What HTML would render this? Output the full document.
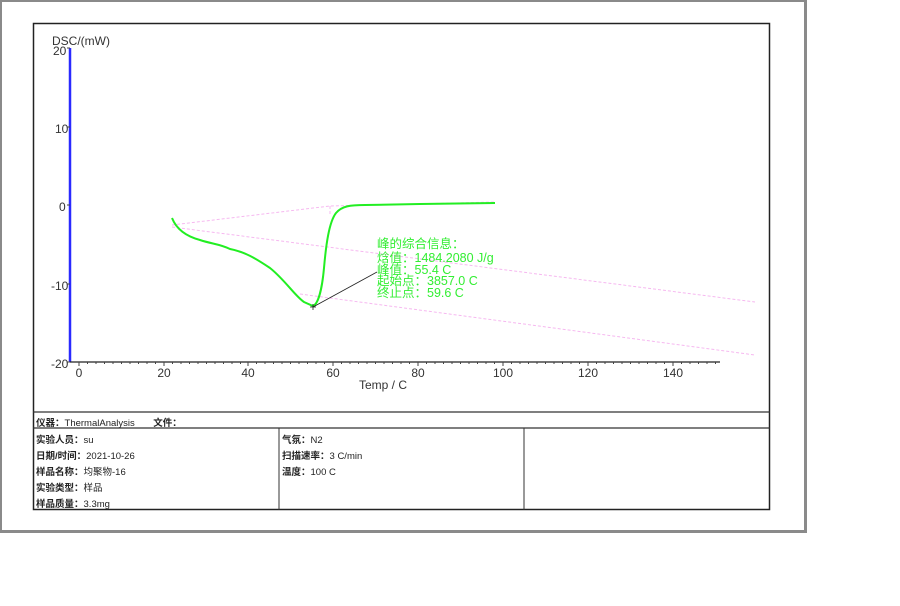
<!DOCTYPE html>
<html><head><meta charset="utf-8"><style>
body{margin:0;width:900px;height:606px;background:#fff;position:relative;overflow:hidden;font-family:"Liberation Sans","Noto Sans CJK SC",sans-serif}
.frame{position:absolute;left:0;top:0;width:802px;height:528px;border:2px solid #8a8a8a;border-right-width:3px;border-bottom-width:3px}
.t{position:absolute;font-size:9.5px;color:#222;white-space:nowrap}
.t b{font-weight:bold}
</style></head><body>
<div class="frame"></div>
<svg width="900" height="606" style="position:absolute;left:0;top:0">
<rect x="33.5" y="23.5" width="736" height="486" fill="none" stroke="#222" stroke-width="1.5"/>
<line x1="33" y1="412" x2="770" y2="412" stroke="#333" stroke-width="1.3"/>
<line x1="33" y1="428" x2="770" y2="428" stroke="#333" stroke-width="1.3"/>
<line x1="279" y1="428" x2="279" y2="510" stroke="#333" stroke-width="1"/>
<line x1="524" y1="428" x2="524" y2="510" stroke="#333" stroke-width="1"/>
<line x1="70" y1="48" x2="70" y2="362" stroke="#2a2aff" stroke-width="2.5"/>
<line x1="70" y1="362" x2="720" y2="362" stroke="#222" stroke-width="1.2"/>
<g stroke="#444" stroke-width="1">
<path d="M79 362v4M164 362v4M248 362v4M333 362v4M418 362v4M503 362v4M588 362v4M673 362v4"/>
<path d="M87.5 362v2M96 362v2M104.5 362v2M113 362v2M121.5 362v2M130 362v2M138.5 362v2M147 362v2M155.5 362v2M172.5 362v2M181 362v2M189.5 362v2M198 362v2M206.5 362v2M215 362v2M223.5 362v2M232 362v2M240.5 362v2M256.5 362v2M265 362v2M273.5 362v2M282 362v2M290.5 362v2M299 362v2M307.5 362v2M316 362v2M324.5 362v2M341.5 362v2M350 362v2M358.5 362v2M367 362v2M375.5 362v2M384 362v2M392.5 362v2M401 362v2M409.5 362v2M426.5 362v2M435 362v2M443.5 362v2M452 362v2M460.5 362v2M469 362v2M477.5 362v2M486 362v2M494.5 362v2M511.5 362v2M520 362v2M528.5 362v2M537 362v2M545.5 362v2M554 362v2M562.5 362v2M571 362v2M579.5 362v2M596.5 362v2M605 362v2M613.5 362v2M622 362v2M630.5 362v2M639 362v2M647.5 362v2M656 362v2M664.5 362v2M681.5 362v2M690 362v2M698.5 362v2M707 362v2M715.5 362v2"/>
<path d="M67 48h3M67 127h3M67 205h3M67 284h3M67 362h3"/>
</g>
<g font-family="Liberation Sans" font-size="12" fill="#333">
<text x="52" y="45">DSC/(mW)</text>
<text x="53" y="55">20</text><text x="55" y="133">10</text><text x="59" y="211">0</text>
<text x="51" y="290">-10</text><text x="51" y="368">-20</text>
<g text-anchor="middle"><text x="79" y="377">0</text><text x="164" y="377">20</text><text x="248" y="377">40</text><text x="333" y="377">60</text><text x="418" y="377">80</text><text x="503" y="377">100</text><text x="588" y="377">120</text><text x="673" y="377">140</text></g>
<text x="359" y="389">Temp / C</text>
</g>
<g stroke="#f6b8f0" stroke-width="1" stroke-dasharray="3,2" fill="none">
<path d="M172 225 L330 206 L495 202"/>
<path d="M330 206 L330 216"/>
<path d="M172 227 L755 302"/>
<path d="M300 294 L755 355"/>
</g>
<path d="M172 218 C176 228 185 236 200 240 C212 244 220 244 230 249 C245 252 255 258 270 268 C285 280 295 296 304 302 L313 306 C318 304 322 290 324 268 C326 245 329 222 336 213 C342 206 350 205 365 205 L420 204 L495 203" fill="none" stroke="#22ee22" stroke-width="2"/>
<line x1="313" y1="307" x2="377" y2="272" stroke="#222" stroke-width="0.8"/>
<path d="M310 307h6M313 304v6" stroke="#222" stroke-width="0.8"/>
<g font-size="12.5" fill="#33ee33" font-family="Liberation Sans,Noto Sans CJK SC,sans-serif">
<text x="377" y="248">峰的综合信息：</text>
<text x="377" y="262">焓值：1484.2080 J/g</text>
<text x="377" y="274">峰值：55.4 C</text>
<text x="377" y="285">起始点：3857.0 C</text>
<text x="377" y="297">终止点：59.6 C</text>
</g>
</svg>
<div class="t" style="left:36px;top:415px"><b>仪器：</b>ThermalAnalysis &nbsp; &nbsp; &nbsp; <b>文件：</b></div>
<div class="t" style="left:36px;top:432px"><b>实验人员：</b>su</div>
<div class="t" style="left:36px;top:448px"><b>日期/时间：</b>2021-10-26</div>
<div class="t" style="left:36px;top:464px"><b>样品名称：</b>均聚物-16</div>
<div class="t" style="left:36px;top:480px"><b>实验类型：</b>样品</div>
<div class="t" style="left:36px;top:496px"><b>样品质量：</b>3.3mg</div>
<div class="t" style="left:282px;top:432px"><b>气氛：</b>N2</div>
<div class="t" style="left:282px;top:448px"><b>扫描速率：</b>3 C/min</div>
<div class="t" style="left:282px;top:464px"><b>温度：</b>100 C</div>
</body></html>
